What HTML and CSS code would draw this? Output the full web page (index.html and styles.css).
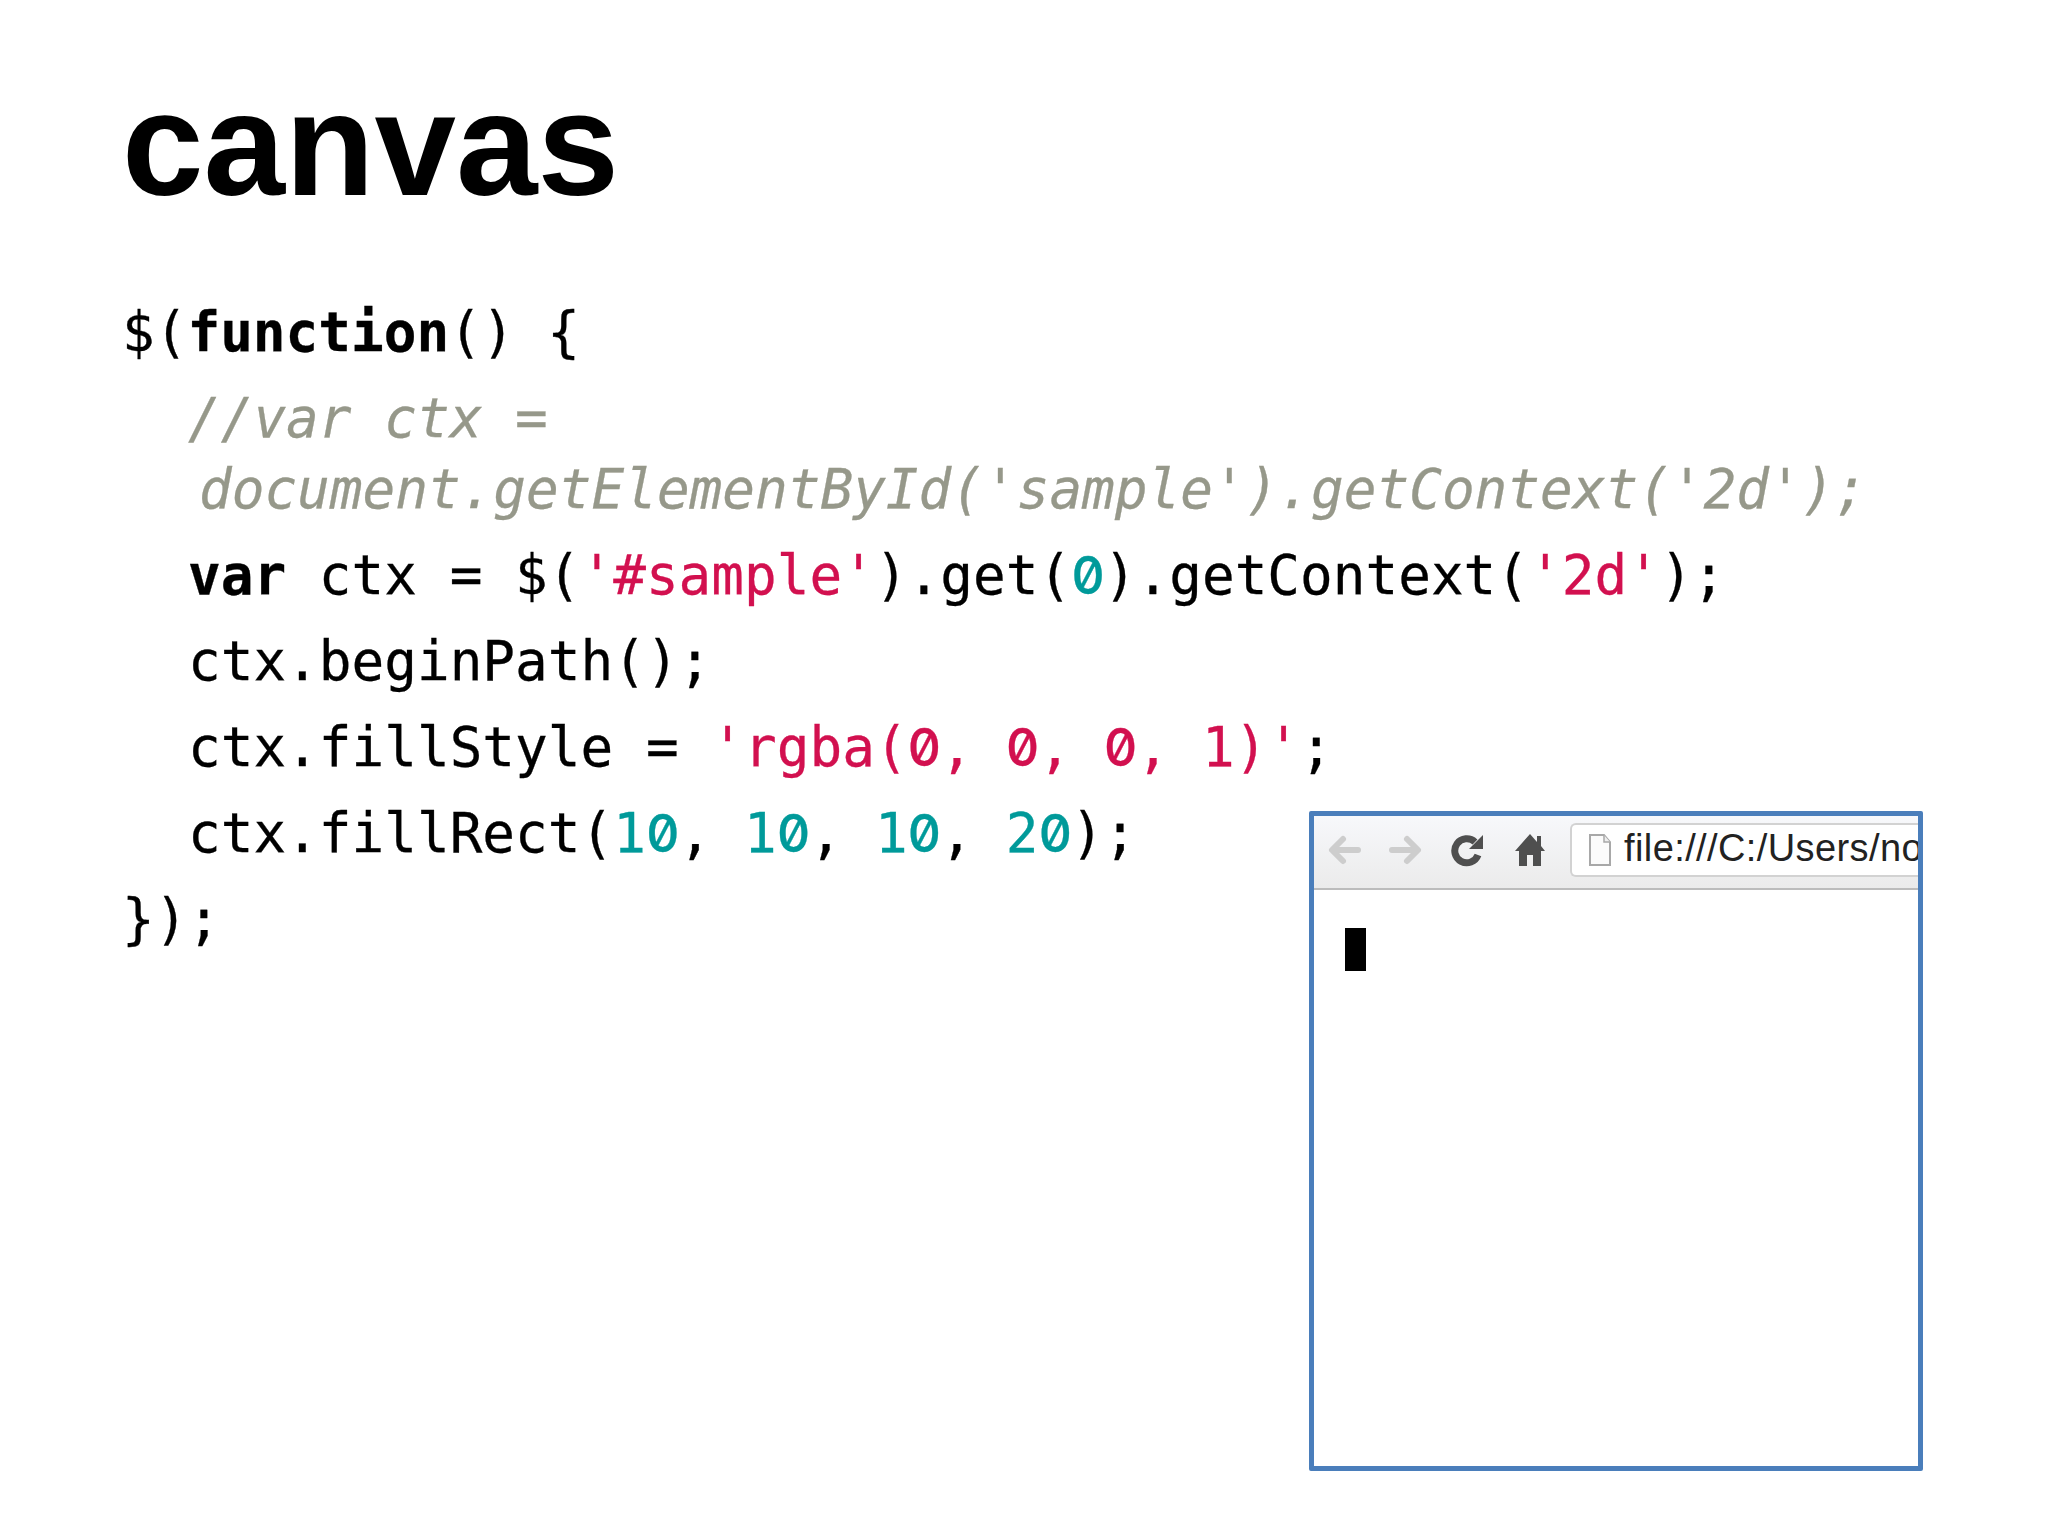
FILE: index.html
```html
<!DOCTYPE html>
<html lang="en">
<head>
<meta charset="utf-8">
<title>canvas</title>
<link rel="stylesheet" href="styles.css">
</head>
<body>
<main class="slide">
  <h1 class="title">canvas</h1>
  <div class="code">
    <p class="line">$(<b>function</b>() {</p>
    <p class="line indent comment">//var ctx =<br><span class="wrapped">document.getElementById('sample').getContext('2d');</span></p>
    <p class="line indent"><b>var</b> ctx = $(<span class="str">'#sample'</span>).get(<span class="num"><span class="zero">0</span></span>).getContext(<span class="str">'2d'</span>);</p>
    <p class="line indent">ctx.beginPath();</p>
    <p class="line indent">ctx.fillStyle = <span class="str">'rgba(<span class="zero">0</span>, <span class="zero">0</span>, <span class="zero">0</span>, 1)'</span>;</p>
    <p class="line indent">ctx.fillRect(<span class="num">1<span class="zero">0</span></span>, <span class="num">1<span class="zero">0</span></span>, <span class="num">1<span class="zero">0</span></span>, <span class="num">2<span class="zero">0</span></span>);</p>
    <p class="line">});</p>
  </div>
  <figure class="browser">
    <div class="toolbar">
      <svg class="nav-icon" viewBox="0 0 34 34"><path d="M31 17H6M16 6 5 17l11 11" fill="none" stroke="#cdcdcd" stroke-width="6" stroke-linejoin="round" stroke-linecap="round"/></svg>
      <svg class="nav-icon" viewBox="0 0 34 34"><path d="M3 17h25M18 6l11 11-11 11" fill="none" stroke="#cdcdcd" stroke-width="6" stroke-linejoin="round" stroke-linecap="round"/></svg>
      <svg class="nav-icon" viewBox="0 0 34 34"><path d="M27 22A12 12 0 1 1 24 9" fill="none" stroke="#4f4f4f" stroke-width="7"/><path d="M32 2v14H18z" fill="#4f4f4f"/></svg>
      <svg class="nav-icon" viewBox="0 0 34 34"><path d="M17 1 2 18h4v15h8V22h6v11h8V18h4l-4-5V3h-4v6z" fill="#4f4f4f"/></svg>
      <div class="address">
        <svg class="page-icon" viewBox="0 0 24 32"><path d="M2 1h14l6 7v23H2z" fill="#fbfbfb" stroke="#a8a8a8" stroke-width="2"/><path d="M16 1v7h6" fill="#eee" stroke="#a8a8a8" stroke-width="1.5"/></svg>
        <span class="url">file:///C:/Users/no</span>
      </div>
    </div>
    <div class="viewport"><div class="rect"></div></div>
  </figure>
</main>
</body>
</html>
```
FILE: styles.css
```css
* { box-sizing: border-box; }
html, body { margin: 0; background: #fff; }
.slide {
  position: relative;
  width: 2048px;
  height: 1536px;
  padding: 53px 0 0 122px;
  overflow: hidden;
  color: #000;
}
.title {
  margin: 0 0 61px;
  font: 700 146.5px/1.25 "Liberation Sans", Arial, sans-serif;
}
.code {
  font: 400 54.33px/71px "DejaVu Sans Mono", monospace;
  -webkit-text-stroke: 0.3px currentColor;
}
.line { margin: 0 0 15px; white-space: pre; }
.indent { padding-left: 66px; }
.comment { color: #96988a; font-style: italic; }
.wrapped { padding-left: 11px; }
.str { color: #d2104f; }
.num { color: #009a9a; }
.zero {
  display: inline-block;
  width: 32.7px;
  text-align: center;
  font-family: Inter, sans-serif;
  font-size: 52px;
  font-weight: 500;
  font-feature-settings: "zero", "tnum";
  line-height: 1;
}
.browser {
  position: absolute;
  left: 1309px;
  top: 811px;
  width: 614px;
  height: 660px;
  margin: 0;
  border: 5px solid #4a7ebb;
  border-radius: 2px;
  overflow: hidden;
  background: #fff;
}
.toolbar {
  display: flex;
  align-items: center;
  gap: 28px;
  height: 74px;
  padding: 0 0 4px 13px;
  background: linear-gradient(#f7f8fb, #ebebeb);
  border-bottom: 2px solid #bcbcbc;
}
.nav-icon { width: 34px; height: 34px; flex: none; }
.address {
  display: flex;
  align-items: center;
  gap: 12px;
  flex: none;
  width: 400px;
  height: 54px;
  margin-left: -5px;
  padding-left: 16px;
  overflow: hidden;
  background: #fff;
  border: 2px solid #d2d2d2;
  border-right: 0;
  border-radius: 6px 0 0 6px;
}
.page-icon { width: 24px; height: 32px; flex: none; }
.url {
  font: 400 38px/1 "Liberation Sans", Arial, sans-serif;
  letter-spacing: 0.4px;
  color: #222;
  white-space: nowrap;
  position: relative;
  top: -2px;
}
.viewport { padding: 38px 0 0 31px; }
.rect { width: 21px; height: 43px; background: #000; }
```
